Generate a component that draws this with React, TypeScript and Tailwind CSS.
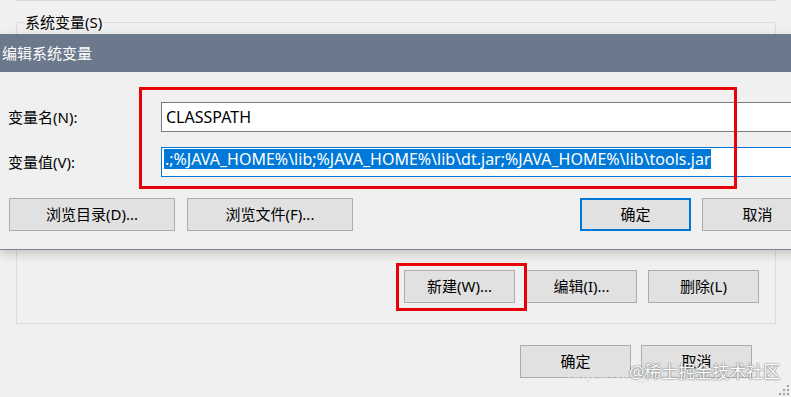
const font = "font-['Noto_Sans','Noto_Sans_CJK_SC',sans-serif]";

const WinButton = ({
  label,
  width = "w-[111px]",
  primary = false,
}: {
  label: string;
  width?: string;
  primary?: boolean;
}) => (
  <div
    className={`${width} h-[33px] flex items-center justify-center bg-[#e1e1e1] text-[15px] text-black ${
      primary ? "border-2 border-[#0078d7]" : "border border-[#adadad]"
    }`}
  >
    {label}
  </div>
);

const Grip = () => (
  <svg width="12" height="12" viewBox="0 0 12 12" className="absolute right-[1px] bottom-[1px]">
    {[
      [9, 1],
      [5, 5],
      [9, 5],
      [1, 9],
      [5, 9],
      [9, 9],
    ].map(([x, y], i) => (
      <rect key={i} x={x} y={y} width="2" height="2" fill="#a0a0a0" />
    ))}
  </svg>
);

const App = () => {
  return (
    <div className={`relative w-[791px] h-[397px] overflow-hidden bg-[#f0f0f0] text-black ${font}`}>
      {/* main window underneath */}
      <div className="flex flex-col pl-[16px] pr-[15px]">
        <div className="h-px bg-[#d9d9d9]" />
        <fieldset className="mt-[10px] h-[313px] border border-[#dcdcdc] px-0">
          <legend className="ml-[7px] px-px text-[15px] leading-[22px]">系统变量(S)</legend>
          <div className="flex justify-end gap-[11px] pt-[237px] pr-[16px]">
            <WinButton label="新建(W)..." />
            <WinButton label="编辑(I)..." />
            <WinButton label="删除(L)" />
          </div>
        </fieldset>
        <div className="flex justify-end gap-[10px] mt-[21px] pr-[24px]">
          <WinButton label="确定" />
          <WinButton label="取消" />
        </div>
      </div>

      {/* highlight around 新建 */}
      <div className="absolute left-[396px] top-[263px] w-[131px] h-[48px] border-[3px] border-[#e8000b]" />

      {/* edit dialog */}
      <div className="absolute left-0 top-[34px] w-[830px] shadow-[0_4px_10px_rgba(0,0,0,0.18)]">
        <div className="h-[38px] bg-[#6c788b] text-white text-[15px] flex items-center pl-[2px]">
          编辑系统变量
        </div>
        <div className="relative h-[178px] bg-[#f0f0f0] border-b border-[#7e8190] pt-[30px]">
          <div className="flex items-center">
            <div className="w-[161px] pl-[8px] text-[15px]">变量名(N):</div>
            <div className="w-[650px] h-[30px] border border-[#7a7a7a] bg-white flex items-center pl-[4px] text-[16px]">
              CLASSPATH
            </div>
          </div>
          <div className="flex items-center mt-[15px]">
            <div className="w-[161px] pl-[8px] text-[15px]">变量值(V):</div>
            <div className="w-[650px] h-[30px] border border-[#0078d7] bg-white flex items-start pt-px pl-[2px] text-[16px]">
              <span className="bg-[#0078d7] text-white leading-[20px] pl-px">
                .;%JAVA_HOME%\lib;%JAVA_HOME%\lib\dt.jar;%JAVA_HOME%\lib\tools.jar
              </span>
            </div>
          </div>
          <div className="flex mt-[21px] pl-[9px]">
            <WinButton label="浏览目录(D)..." width="w-[166px]" />
            <div className="ml-[12px]">
              <WinButton label="浏览文件(F)..." width="w-[166px]" />
            </div>
            <div className="ml-[227px]">
              <WinButton label="确定" primary />
            </div>
            <div className="ml-[11px]">
              <WinButton label="取消" />
            </div>
          </div>

          {/* highlight around the two fields */}
          <div className="absolute left-[139px] top-[15px] w-[598px] h-[102px] border-[3px] border-[#e8000b]" />
        </div>
      </div>

      {/* watermark */}
      <div className="absolute left-[567px] top-[362px] text-[15px] text-[#e2e2e2] tracking-tight">
        https://blog.csdn.net
      </div>
      <div className="absolute left-[629px] top-[360px] text-[17px] leading-[24px] text-white [text-shadow:0_0_1px_#666,0_0_2px_#777]">
        @稀土掘金技术社区
      </div>
      <Grip />
    </div>
  );
};

export default App;
